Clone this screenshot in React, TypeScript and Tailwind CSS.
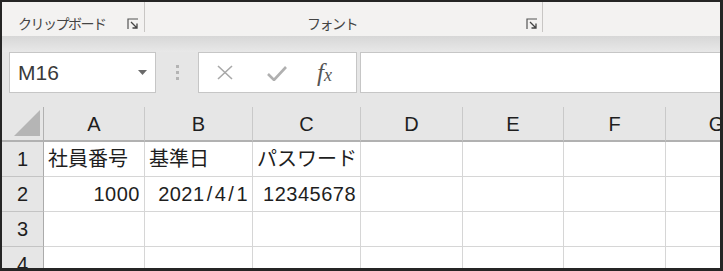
import React from "react";

const cols = ["A", "B", "C", "D", "E", "F", "G"];

const rows: { n: number; cells: { text: string; align?: "left" | "right" }[] }[] = [
  {
    n: 1,
    cells: [{ text: "社員番号" }, { text: "基準日" }, { text: "パスワード" }],
  },
  {
    n: 2,
    cells: [
      { text: "1000", align: "right" },
      { text: "2021/4/1", align: "right" },
      { text: "12345678", align: "right" },
    ],
  },
  { n: 3, cells: [] },
  { n: 4, cells: [] },
];

const font = { fontFamily: '"Liberation Sans", "Noto Sans CJK JP", sans-serif' };

function Launcher() {
  return (
    <svg width="12" height="12" viewBox="0 0 12 12" className="shrink-0">
      <path d="M1 11V1h10" fill="none" stroke="#555" strokeWidth="1.2" />
      <path d="M4 4l6 6M10 5.5V10H5.5" fill="none" stroke="#444" strokeWidth="1.3" />
    </svg>
  );
}

// slashes in dates are wider in the sheet font
function CellText({ text }: { text: string }) {
  if (!text.includes("/")) return <>{text}</>;
  const parts = text.split("/");
  return (
    <>
      {parts.map((p, i) => (
        <React.Fragment key={i}>
          {i > 0 && <span className="mx-[2px]">/</span>}
          {p}
        </React.Fragment>
      ))}
    </>
  );
}

export default function App() {
  return (
    <div
      className="h-[271px] w-[723px] overflow-hidden border-b-[3px] border-l-2 border-r-[3px] border-t-2 border-[#252525] bg-white"
      style={font}
    >
      {/* ribbon group labels */}
      <div className="flex h-[34px] bg-[#f3f2f1] text-[14px] tracking-[-1.5px] text-[#444]">
        <div className="flex w-[142px] items-center pt-[10px]">
          <span className="pl-[16px]">クリップボード</span>
          <span className="ml-auto mr-[5px]">
            <Launcher />
          </span>
        </div>
        <div className="h-[30px] w-px bg-[#c8c6c4]" />
        <div className="flex w-[397px] items-center pt-[10px]">
          <span className="pl-[162px]">フォント</span>
          <span className="ml-auto mr-[4px]">
            <Launcher />
          </span>
        </div>
        <div className="h-[30px] w-px bg-[#c8c6c4]" />
        <div className="flex-1" />
      </div>
      <div className="h-[16px] bg-gradient-to-b from-[#d7d7d7] to-[#e8e8e8]" />

      {/* formula bar */}
      <div className="flex h-[41px] bg-[#e6e6e6]">
        <div className="ml-[7px] flex w-[147px] items-center border border-[#c6c6c6] bg-white pl-[8px] pr-[8px]">
          <span className="text-[21px] text-[#3a3a3a]">M16</span>
          <svg width="9" height="5" viewBox="0 0 9 5" className="ml-auto">
            <path d="M0 0h9L4.5 5z" fill="#6a6a6a" />
          </svg>
        </div>
        <div className="flex w-[42px] flex-col items-center justify-center gap-[3px]">
          <span className="h-[3px] w-[3px] bg-[#b4b4b4]" />
          <span className="h-[3px] w-[3px] bg-[#b4b4b4]" />
          <span className="h-[3px] w-[3px] bg-[#b4b4b4]" />
        </div>
        <div className="flex w-[159px] items-center border border-[#c6c6c6] bg-white">
          <svg width="16" height="15" viewBox="0 0 16 15" className="ml-[18px]">
            <path d="M1 1l14 13M15 1L1 14" stroke="#a8a8a8" strokeWidth="1.6" fill="none" />
          </svg>
          <svg width="20" height="16" viewBox="0 0 20 16" className="ml-[34px]">
            <path d="M1 9l6 6L19 2" stroke="#b0b0b0" strokeWidth="2.6" fill="none" />
          </svg>
          <span
            className="ml-[30px] text-[25px] italic leading-none text-[#555]"
            style={{ fontFamily: '"Liberation Serif", serif' }}
          >
            f<span className="text-[18px]">x</span>
          </span>
        </div>
        <div className="ml-[3px] flex-1 border border-r-0 border-[#c6c6c6] bg-white" />
      </div>
      <div className="h-[14px] bg-[#e6e6e6]" />

      {/* sheet */}
      <div className="grid w-max grid-cols-[42px_101px_108px_108px_102px_101px_102px_102px] text-[20px] text-[#1e1e1e]">
        <div className="flex h-[35px] items-end justify-end border-b-2 border-r border-[#b1b1b1] bg-[#e6e6e6] pb-[4px] pr-[3px]">
          <svg width="26" height="26" viewBox="0 0 26 26">
            <path d="M26 0V26H0z" fill="#b5b5b5" />
          </svg>
        </div>
        {cols.map((c) => (
          <div
            key={c}
            className="flex h-[35px] items-center justify-center border-b-2 border-r border-b-[#b1b1b1] border-r-[#c9c9c9] bg-[#e6e6e6] pt-[1px]"
          >
            {c}
          </div>
        ))}
        {rows.map((r) => (
          <React.Fragment key={r.n}>
            <div className="flex h-[35px] items-center justify-center border-b border-r border-b-[#c4c4c4] border-r-[#ababab] bg-[#e6e6e6]">
              {r.n}
            </div>
            {cols.map((c, i) => {
              const cell = r.cells[i];
              return (
                <div
                  key={c}
                  className={`flex h-[35px] items-center whitespace-nowrap border-b border-r border-[#d6d6d6] px-[4px] ${
                    cell?.align === "right" ? "justify-end tracking-[0.5px]" : "justify-start"
                  }`}
                >
                  {cell ? <CellText text={cell.text} /> : null}
                </div>
              );
            })}
          </React.Fragment>
        ))}
      </div>
    </div>
  );
}
